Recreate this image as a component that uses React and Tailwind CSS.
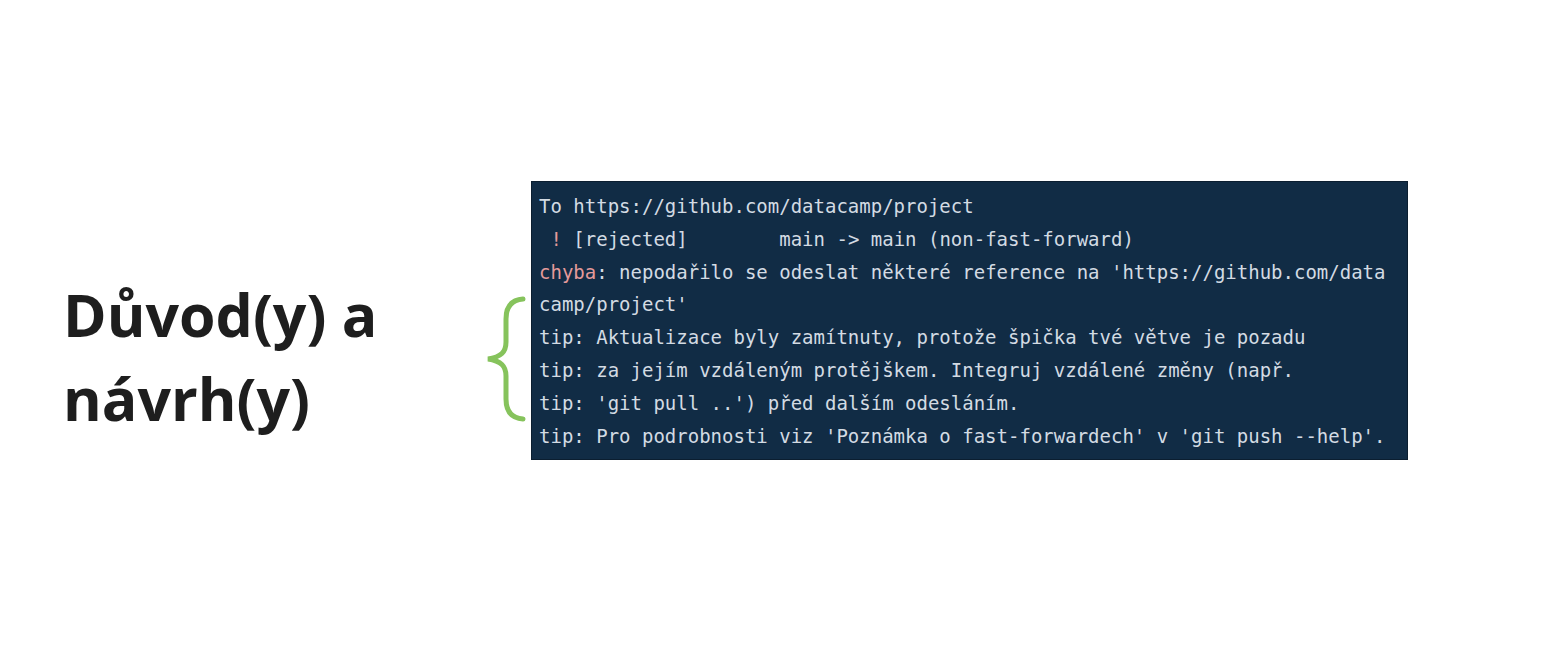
import React from 'react';

const lines = [
    [{ t: 'To https://github.com/datacamp/project' }],
    [{ t: ' ' }, { t: '!', c: 'text-[#e49a9a]' }, { t: ' [rejected]        main -> main (non-fast-forward)' }],
    [{ t: 'chyba', c: 'text-[#e49a9a]' }, { t: ": nepodařilo se odeslat některé reference na 'https://github.com/data" }],
    [{ t: "camp/project'" }],
    [{ t: 'tip: Aktualizace byly zamítnuty, protože špička tvé větve je pozadu' }],
    [{ t: 'tip: za jejím vzdáleným protějškem. Integruj vzdálené změny (např.' }],
    [{ t: "tip: 'git pull ..') před dalším odesláním." }],
    [{ t: "tip: Pro podrobnosti viz 'Poznámka o fast-forwardech' v 'git push --help'." }],
];

const Brace = () => (
    <svg width="40" height="126" viewBox="0 0 40 126" className="mt-[296px]">
        <path
            d="M37 3 C25 4 20 11 20 23 L20 46 C20 56 15 61 2 63 C15 65 20 70 20 80 L20 103 C20 115 25 122 37 123"
            fill="none"
            stroke="#86c35c"
            strokeWidth="5"
            strokeLinecap="round"
        />
    </svg>
);

const App = () => {
    return (
        <div className="w-full h-[672px] bg-white flex">
            <div className="w-[486px] shrink-0 pl-[63px] pt-[272px]">
                <h1 className="text-[59px] leading-[84px] font-bold text-[#1e1e1e] font-['Open_Sans',sans-serif]">
                    Důvod(y) a<br />návrh(y)
                </h1>
            </div>
            <div className="shrink-0">
                <Brace />
            </div>
            <div className="shrink-0 mt-[181px] ml-[5px] w-[877px] h-[279px] bg-[#112c45] border border-[#0b1e30] pl-[7px] pr-2 py-2">
                <pre className="font-['DejaVu_Sans_Mono',monospace] text-[19px] leading-[32.8px] text-[#d3dbe3] whitespace-pre">
                    {lines.map((parts, i) => (
                        <div key={i}>
                            {parts.map((p, j) => (
                                <span key={j} className={p.c}>{p.t}</span>
                            ))}
                        </div>
                    ))}
                </pre>
            </div>
        </div>
    );
};

export default App;
